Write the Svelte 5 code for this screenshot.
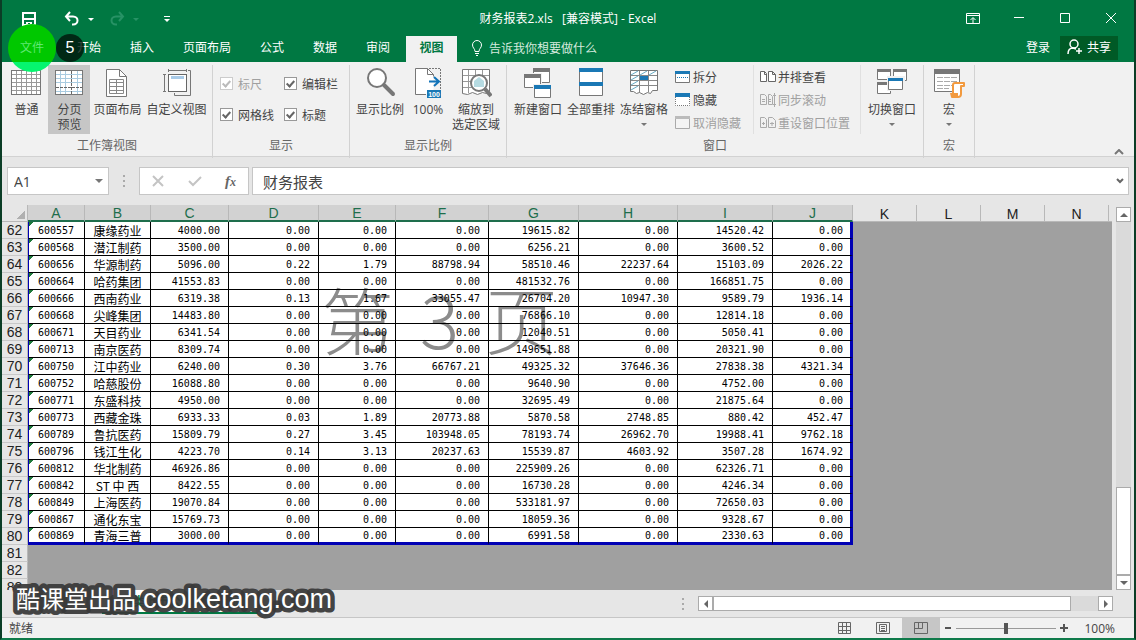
<script lang="ts">
	type Size = 'large' | 'small';

	const tabs = ['插入', '页面布局', '公式', '数据', '审阅', '视图'];
	let activeTab = $state('视图');

	const columns = ['A', 'B', 'C', 'D', 'E', 'F', 'G', 'H', 'I', 'J'];
	const emptyColumns = ['K', 'L', 'M', 'N'];

	// code|name|C..J
	const source = `600557|康缘药业|4000.00|0.00|0.00|0.00|19615.82|0.00|14520.42|0.00
600568|潜江制药|3500.00|0.00|0.00|0.00|6256.21|0.00|3600.52|0.00
600656|华源制药|5096.00|0.22|1.79|88798.94|58510.46|22237.64|15103.09|2026.22
600664|哈药集团|41553.83|0.00|0.00|0.00|481532.76|0.00|166851.75|0.00
600666|西南药业|6319.38|0.13|1.67|33055.47|26704.20|10947.30|9589.79|1936.14
600668|尖峰集团|14483.80|0.00|0.00|0.00|76866.10|0.00|12814.18|0.00
600671|天目药业|6341.54|0.00|0.00|0.00|12040.51|0.00|5050.41|0.00
600713|南京医药|8309.74|0.00|0.00|0.00|149651.88|0.00|20321.90|0.00
600750|江中药业|6240.00|0.30|3.76|66767.21|49325.32|37646.36|27838.38|4321.34
600752|哈慈股份|16088.80|0.00|0.00|0.00|9640.90|0.00|4752.00|0.00
600771|东盛科技|4950.00|0.00|0.00|0.00|32695.49|0.00|21875.64|0.00
600773|西藏金珠|6933.33|0.03|1.89|20773.88|5870.58|2748.85|880.42|452.47
600789|鲁抗医药|15809.79|0.27|3.45|103948.05|78193.74|26962.70|19988.41|9762.18
600796|钱江生化|4223.70|0.14|3.13|20237.63|15539.87|4603.92|3507.28|1674.92
600812|华北制药|46926.86|0.00|0.00|0.00|225909.26|0.00|62326.71|0.00
600842|ST 中 西|8422.55|0.00|0.00|0.00|16730.28|0.00|4246.34|0.00
600849|上海医药|19070.84|0.00|0.00|0.00|533181.97|0.00|72650.03|0.00
600867|通化东宝|15769.73|0.00|0.00|0.00|18059.36|0.00|9328.67|0.00
600869|青海三普|3000.00|0.00|0.00|0.00|6991.58|0.00|2330.63|0.00`;

	const rows = source.split('\n').map((line, i) => ({ number: 62 + i, cells: line.split('|') }));
	const emptyRows = [81, 82, 83];

	let checks = $state([
		{ id: 'ruler', label: '标尺', checked: true, disabled: true },
		{ id: 'formula-bar', label: '编辑栏', checked: true, disabled: false },
		{ id: 'gridlines', label: '网格线', checked: true, disabled: false },
		{ id: 'headings', label: '标题', checked: true, disabled: false }
	]);

	let zoom = $state(100);
	let formula = $state('财务报表');
	let cellName = $state('A1');
</script>

{#snippet icon(name: string, size: Size = 'large')}
	<svg class="icon {size}" viewBox={size === 'large' ? '0 0 32 32' : '0 0 18 16'} aria-hidden="true">
		{#if name === 'normal'}
			<rect x="1.5" y="3.5" width="29" height="24" fill="#fff" stroke="#777" />
			<path d="M6.5 4v23M11.5 4v23M16.5 4v23M21.5 4v23M26.5 4v23M2 7.5h28M2 11.5h28M2 15.5h28M2 19.5h28M2 23.5h28" stroke="#999" fill="none" />
		{:else if name === 'break'}
			<rect x="2.5" y="3.5" width="27" height="24" fill="#fff" stroke="#777" />
			<path d="M7.5 4v23M12.5 4v23M24.5 4v23M3 7.5h26M3 11.5h26M3 15.5h26M3 24.5h26" stroke="#a9cbe0" fill="none" />
			<path d="M18.5 4v23M3 20.5h26" stroke="#666" stroke-dasharray="3 1" fill="none" />
		{:else if name === 'page'}
			<path d="M5.5 2.5h13l7 7v20h-20z" fill="#fff" stroke="#777" />
			<path d="M18.5 2.5v7h7" fill="none" stroke="#777" />
			<path d="M8.5 12.5h14v14h-14zM15.5 12.5v14M8.5 15.5h14M8.5 19.5h14M8.5 23.5h14" fill="none" stroke="#888" />
		{:else if name === 'custom'}
			<rect x="7.5" y="7.5" width="18" height="17" fill="#fff" stroke="#666" />
			<path d="M10 9h13v3H10z" fill="#a9cbe8" />
			<path d="M7.5 3.5h18M7.5 2v3M25.5 2v3M3.5 7.5v17M2 7.5h3M2 24.5h3M27 3.5h2.5v25h-16V26" fill="none" stroke="#777" />
		{:else if name === 'zoom'}
			<circle cx="13" cy="11" r="9" fill="#fff" stroke="#777" stroke-width="2" />
			<path d="M20 18l9 9" stroke="#777" stroke-width="4" stroke-linecap="round" />
		{:else if name === 'hundred'}
			<path d="M3.5 1.5h12l6 6v20h-18z" fill="#fff" />
			<path d="M14 27.5H3.5v-26h12l6 6h-6v-6" fill="none" stroke="#777" />
			<path d="M17 1.5h11.500V23M21.5 7.5V10" fill="none" stroke="#777" stroke-dasharray="2 1" />
			<path d="M17 14.5h9M22 10l5 4.500-5 4.500" fill="none" stroke="#1273b8" stroke-width="2" />
			<rect x="15" y="23" width="14" height="8" fill="#1a78b5" />
			<text x="22" y="30" font-size="7" font-weight="bold" text-anchor="middle" fill="#fff" font-family="Liberation Sans, sans-serif">100</text>
		{:else if name === 'selection'}
			<path d="M2.5 2.5h27v22l-3 2-4-1-5 2-5-2-5 2-5-1z" fill="#fff" stroke="#777" />
			<path d="M8.5 3v23M15.5 3v5M22.5 3v5M3 8.5h26M3 14.5h9M3 20.5h9" stroke="#999" fill="none" />
			<circle cx="19" cy="16" r="8" fill="#fff" stroke="#777" stroke-width="2" />
			<path d="M14 14l5-4 5 4v6H14z" fill="#b6dbe2" />
			<path d="M25 22l6 7" stroke="#777" stroke-width="4" />
		{:else if name === 'new-window'}
			<path d="M11.5 2.5h16v13h-16z" fill="#fff" stroke="#777" /><path d="M11 1h17v4H11z" fill="#777" />
			<path d="M1 6h19v15H1z" fill="#f1f1f1" />
			<path d="M2.5 8.5h16v12h-16z" fill="#fff" stroke="#777" /><path d="M2 7h17v4H2z" fill="#777" />
			<path d="M11 17h19v14H11z" fill="#f1f1f1" />
			<path d="M12.500 18.5h16v12h-16z" fill="#fff" stroke="#777" /><path d="M12 18h17v4H12z" fill="#1a78b5" />
		{:else if name === 'arrange'}
			<path d="M4.5 1.5h23v27h-23z" fill="#fff" stroke="#777" />
			<path d="M4 1h24v4H4zM4 15h24v4H4z" fill="#1a78b5" />
		{:else if name === 'freeze'}
			<path d="M2.5 3.5h27v20h-5l-2 3-3-1-4 2-4-2-3 1-3-2h-3z" fill="#fff" stroke="#777" />
			<path d="M11.5 4v22M20.5 4v21M3 8.5h26M3 13.5h26M3 18.5h26" fill="none" stroke="#888" />
			<path d="M3 8l7-4M12 8l7-4M21 8l7-4M3 13l7-4M3 18l7-4M3 23l7-4" stroke="#67abc4" fill="none" />
			<path d="M12 9h8v4h-8z" fill="#1a78b5" />
		{:else if name === 'switch'}
			<path d="M1.5 2.5h13v10h-13zM17.5 2.5h13v11h-13zM1.5 15.5h13v11h-13z" fill="#fff" stroke="#777" />
			<path d="M1 2h14v3H1zM17 2h14v3H17zM1 15h14v3H1z" fill="#777" />
			<path d="M11 9h18v15H11z" fill="#f1f1f1" />
			<path d="M12.5 11.5h14v11h-14z" fill="#fff" stroke="#777" /><path d="M12 11h15v3H12z" fill="#1a78b5" />
		{:else if name === 'macro'}
			<path d="M1.5 3.5h25v21h-25z" fill="#fff" stroke="#777" /><path d="M1 2h26v5H1z" fill="#777" />
			<path d="M4 10.5h20M4 14.5h20M4 18.5h16M4 21.5h12" stroke="#aaa" stroke-dasharray="6 1" fill="none" />
			<path d="M20 27V18c0-2 1-2 2-2h9v3h-3v8c0 2-1 3-3 3h-6v-3h6" fill="#fff" stroke="#f29a3f" stroke-width="2" stroke-linejoin="round" />
			<path d="M17 26h8v4h-7z" fill="#f29a3f" />
		{:else if name === 'split'}
			<path d="M1.5 2.5h14v11h-14z" fill="#fff" stroke="#777" /><path d="M1 2h15v3H1z" fill="#1a78b5" />
			<path d="M3 8.5h12" stroke="#1a78b5" stroke-dasharray="1 1" />
		{:else if name === 'hide'}
			<path d="M1 1h15v13H1z" fill="#fff" />
			<path d="M1.5 5v8.500h14V5" fill="none" stroke="#777" stroke-dasharray="1 1" /><path d="M1 1h15v4H1z" fill="#1a78b5" />
		{:else if name === 'unhide'}
			<path d="M1.5 1.5h14v12h-14z" fill="#f4f4f4" stroke="#aaa" /><path d="M1 1h15v3H1z" fill="#bbb" />
		{:else if name === 'side'}
			<path d="M1.5 2.5h4l2 2v8h-6zM9.5 2.5h4l3 3v7h-7zM5.5 2.5v3h2M13.5 2.5v3h3" fill="#fff" stroke="#666" />
		{:else if name === 'sync'}
			<path d="M1.5 2.5h4l2 2v8h-6zM9.5 2.5h2l2 2v8h-4z" fill="none" stroke="#aaa" />
			<path d="M3 7.5h3M3 9.5h3M10 7.5h2M10 9.5h2M15.5 1v14M14 3.5h3M14 12.5h3" stroke="#aaa" fill="none" />
		{:else if name === 'reset'}
			<path d="M1.5 2.5h4l2 2v8h-6zM9.5 2.5h4l3 3v7h-7z" fill="none" stroke="#aaa" />
			<path d="M3 8.5h3M4.5 7v3M11 8.5h4M13 7v4" stroke="#aaa" fill="none" />
		{/if}
	</svg>
{/snippet}

{#snippet bigButton(name: string, lines: string[], arrow = false, selected = false)}
	<button class="big" class:selected>
		{@render icon(name)}
		{#each lines as line}<span>{line}</span>{/each}
		{#if arrow}<i class="caret"></i>{/if}
	</button>
{/snippet}

{#snippet smallButton(name: string, label: string, disabled = false)}
	<button class="small-button" {disabled}>{@render icon(name, 'small')}<span>{label}</span></button>
{/snippet}

<div class="window">
	<header class="top">
		<div class="title-bar">
			<div class="quick">
				<button aria-label="保存">
					<svg width="16" height="16" viewBox="0 0 16 16"><path d="M2 2h12v12H2zM3 8h10" fill="none" stroke="#fff" stroke-width="2" /><path d="M5 11h6v4H9v-3H7v3H5z" fill="#fff" /></svg>
				</button>
				<button class="undo" aria-label="撤消">
					<svg width="16" height="16" viewBox="0 0 16 16"><path d="M2 5.5h7c6 0 6 8 0 8H8M6 1L2 5.500 6 10" fill="none" stroke="#fff" stroke-width="2" /></svg>
					<i class="caret"></i>
				</button>
				<button class="redo" aria-label="恢复" disabled>
					<svg width="16" height="16" viewBox="0 0 16 16"><path d="M14 5.5H7c-6 0-6 8 0 8h1M10 1l4 4.500-4 4.500" fill="none" stroke="#279265" stroke-width="2" /></svg>
					<i class="caret"></i>
				</button>
				<button class="customize" aria-label="自定义快速访问工具栏"><i class="caret"></i></button>
			</div>
			<h1>财务报表2.xls&nbsp;&nbsp; [兼容模式] - Excel</h1>
			<div class="controls">
				<button aria-label="功能区显示选项"><svg width="14" height="12" viewBox="0 0 14 12"><path d="M.5.500h13v10H.500zM1 2.500h12M7 10V5M4.500 7L7 4.500 9.500 7" fill="none" stroke="#fff" /></svg></button>
				<button aria-label="最小化"><svg width="12" height="12" viewBox="0 0 12 12"><path d="M1 4.500h10" stroke="#fff" /></svg></button>
				<button aria-label="最大化"><svg width="12" height="12" viewBox="0 0 12 12"><path d="M1.500.500h9v9h-9z" fill="none" stroke="#fff" /></svg></button>
				<button aria-label="关闭"><svg width="12" height="12" viewBox="0 0 12 12"><path d="M1 0l10 10M11 0L1 10" stroke="#fff" /></svg></button>
			</div>
		</div>
		<nav class="tabs">
			<button class="tab file"><span>文件</span></button>
			<button class="tab">开始<span class="step">5</span></button>
			{#each tabs as tab}
				<button class="tab" class:active={tab === activeTab} onclick={() => (activeTab = tab)}>{tab}</button>
			{/each}
			<button class="tell">
				<svg width="12" height="16" viewBox="0 0 12 16"><path d="M4 11.500c0-3-2.500-3.500-2.500-6.500a4.500 4.500 0 0 1 9 0c0 3-2.500 3.500-2.500 6.500zM4 13.500h4M5 15.500h2" fill="none" stroke="#fff" /></svg>
				告诉我你想要做什么
			</button>
			<div class="account">
				<button class="login">登录</button>
				<button class="share">
					<svg width="16" height="16" viewBox="0 0 16 16"><circle cx="7" cy="5" r="4" fill="none" stroke="#fff" stroke-width="1.500" /><path d="M1 15c0-4 2-6 5-6l3 1M12 9v6M9 12h6" fill="none" stroke="#fff" stroke-width="1.500" /></svg>
					共享
				</button>
			</div>
		</nav>
	</header>

	<section class="ribbon">
		<div class="group">
			<div class="group-body">
				{@render bigButton('normal', ['普通'])}
				{@render bigButton('break', ['分页', '预览'], false, true)}
				{@render bigButton('page', ['页面布局'])}
				{@render bigButton('custom', ['自定义视图'])}
			</div>
			<div class="group-label">工作簿视图</div>
		</div>
		<div class="group">
			<div class="group-body checks">
				{#each checks as check}
					<label for={check.id} class:disabled={check.disabled}>
						<input type="checkbox" id={check.id} bind:checked={check.checked} disabled={check.disabled} />
						{check.label}
					</label>
				{/each}
			</div>
			<div class="group-label">显示</div>
		</div>
		<div class="group">
			<div class="group-body">
				{@render bigButton('zoom', ['显示比例'])}
				{@render bigButton('hundred', ['100%'])}
				{@render bigButton('selection', ['缩放到', '选定区域'])}
			</div>
			<div class="group-label">显示比例</div>
		</div>
		<div class="group">
			<div class="group-body">
				{@render bigButton('new-window', ['新建窗口'])}
				{@render bigButton('arrange', ['全部重排'])}
				{@render bigButton('freeze', ['冻结窗格'], true)}
				<div class="stack">
					{@render smallButton('split', '拆分')}
					{@render smallButton('hide', '隐藏')}
					{@render smallButton('unhide', '取消隐藏', true)}
				</div>
				<div class="stack ruled">
					{@render smallButton('side', '并排查看')}
					{@render smallButton('sync', '同步滚动', true)}
					{@render smallButton('reset', '重设窗口位置', true)}
				</div>
				{@render bigButton('switch', ['切换窗口'], true)}
			</div>
			<div class="group-label">窗口</div>
		</div>
		<div class="group">
			<div class="group-body">
				{@render bigButton('macro', ['宏'], true)}
			</div>
			<div class="group-label">宏</div>
		</div>
		<button class="collapse" aria-label="折叠功能区"><svg width="10" height="6" viewBox="0 0 10 6"><path d="M1 5l4-4 4 4" fill="none" stroke="#777" stroke-width="2" /></svg></button>
	</section>

	<section class="formula-bar">
		<div class="name-box">
			<input type="text" aria-label="名称框" bind:value={cellName} />
			<i class="caret"></i>
		</div>
		<span class="grip"></span>
		<div class="fx-box">
			<button aria-label="取消"><svg width="12" height="12" viewBox="0 0 12 12"><path d="M1 1l10 10M11 1L1 11" stroke="#c4c4c4" stroke-width="2" /></svg></button>
			<button aria-label="输入"><svg width="14" height="12" viewBox="0 0 14 12"><path d="M1 6l4 4 8-8" fill="none" stroke="#c4c4c4" stroke-width="2" /></svg></button>
			<button class="fx" aria-label="插入函数">f<small>x</small></button>
		</div>
		<div class="formula">
			<input type="text" aria-label="编辑栏" bind:value={formula} />
			<svg width="8" height="6" viewBox="0 0 8 6"><path d="M1 1l3 3 3-3" fill="none" stroke="#666" stroke-width="2" /></svg>
		</div>
	</section>

	<main class="sheet">
		<div class="grid">
			<div class="page-mark" aria-hidden="true"><span>第</span><span>3</span><span>页</span></div>
			<table>
				<colgroup>
					<col class="w-head" /><col class="w-a" /><col class="w-b" /><col class="w-c" /><col class="w-d" />
					<col class="w-e" /><col class="w-f" /><col class="w-g" /><col class="w-h" /><col class="w-i" /><col class="w-j" />
					{#each emptyColumns as column (column)}<col class="w-empty" />{/each}
					<col />
				</colgroup>
				<thead>
					<tr>
						<th class="corner"><i></i></th>
						{#each columns as column}<th class="used">{column}</th>{/each}
						{#each emptyColumns as column}<th>{column}</th>{/each}
						<th class="rest"></th>
					</tr>
				</thead>
				<tbody>
					{#each rows as row, i}
						<tr class:last={i === rows.length - 1}>
							<th>{row.number}</th>
							{#each row.cells as cell, c}
								<td class:code={c === 0} class:name={c === 1}>{cell}</td>
							{/each}
							<td class="void" colspan="5"></td>
						</tr>
					{/each}
					{#each emptyRows as number}
						<tr><th>{number}</th><td class="void" colspan="15"></td></tr>
					{/each}
				</tbody>
			</table>
		</div>
		<div class="vscroll">
			<button aria-label="向上滚动"><i class="caret up"></i></button>
			<div class="track"><div class="thumb"></div></div>
			<button aria-label="向下滚动"><i class="caret"></i></button>
		</div>
	</main>

	<div class="sheet-bar">
		<button class="sheet-tab">××类上市公司财务指标</button>
		<button class="add" aria-label="新工作表">+</button>
		<span class="grip"></span>
		<div class="hscroll">
			<button aria-label="向左滚动"><i class="caret left"></i></button>
			<div class="track"><div class="thumb"></div></div>
			<button aria-label="向右滚动"><i class="caret right"></i></button>
		</div>
	</div>

	<footer class="status">
		<span class="ready">就绪</span>
		<button aria-label="普通视图"><svg width="14" height="14" viewBox="0 0 14 14"><path d="M.5 1.500h12v11H.500zM4.500 1.500v11M8.500 1.500v11M.5 5.500h12M.5 9.500h12" fill="none" stroke="#666" /></svg></button>
		<button aria-label="页面布局视图"><svg width="14" height="14" viewBox="0 0 14 14"><path d="M.5 1.500h13v11H.500zM3.500 3.500h7v7h-7zM5 5.500h4M5 7.500h4M5 9.500h4" fill="none" stroke="#666" /></svg></button>
		<button class="current" aria-label="分页预览视图"><svg width="14" height="14" viewBox="0 0 14 14"><path d="M.5 1.500h13v11H.500zM.5 7.500h8v-6M4.500 1.500v6" fill="none" stroke="#666" /></svg></button>
		<button class="step-button" aria-label="缩小" onclick={() => (zoom -= 10)}><svg width="8" height="8" viewBox="0 0 8 8"><path d="M1 4h6" stroke="#555" stroke-width="2" /></svg></button>
		<input class="zoom" type="range" min="0" max="200" aria-label="缩放" bind:value={zoom} />
		<button class="step-button" aria-label="放大" onclick={() => (zoom += 10)}><svg width="8" height="8" viewBox="0 0 8 8"><path d="M0 4h8M4 0v8" stroke="#555" stroke-width="2" /></svg></button>
		<span class="percent">{zoom}%</span>
	</footer>

	<svg class="caption" width="340" height="44" viewBox="0 0 340 44">
		<text x="7" y="29">酷课堂出品</text>
		<text class="site" x="134" y="29">coolketang.com</text>
	</svg>
</div>

<style>
	:global(body) {
		margin: 0;
	}

	.window {
		position: relative;
		display: flex;
		flex-direction: column;
		height: 100vh;
		box-sizing: border-box;
		border: 2px solid #0b3d26;
		border-top: 0;
		border-bottom-color: #0f7a4a;
		background: #e6e6e6;
		color: #444;
		font-family: 'Open Sans', 'Noto Sans CJK SC', sans-serif;
		font-size: 12px;
		overflow: hidden;
	}

	button {
		display: flex;
		align-items: center;
		justify-content: center;
		padding: 0;
		border: 0;
		background: none;
		color: inherit;
		font: inherit;
		white-space: nowrap;
	}

	svg {
		display: block;
		flex: none;
	}

	.caret {
		border: 3px solid transparent;
		border-top-color: currentColor;
		border-bottom: 0;
	}

	.caret.up {
		transform: rotate(180deg);
	}

	.caret.left {
		transform: rotate(90deg);
	}

	.caret.right {
		transform: rotate(-90deg);
	}

	/* Title bar and tabs */
	.top {
		position: relative;
		z-index: 2;
		flex: none;
		background: #007842;
		color: #fff;
	}

	.title-bar {
		display: grid;
		grid-template-columns: 1fr auto 1fr;
		align-items: center;
		height: 36px;
	}

	.quick {
		display: flex;
		align-items: center;
		gap: 27px;
		padding-left: 19px;
	}

	.quick button {
		gap: 8px;
	}

	.redo {
		margin-left: -12px;
		color: #279265;
	}

	.customize {
		flex-direction: column;
		margin-left: -2px;
	}

	.quick .customize {
		gap: 2px;
	}

	.customize::before {
		content: '';
		width: 6px;
		height: 1px;
		background: #fff;
	}

	h1 {
		margin: 0;
		font-size: 12px;
		line-height: 38px;
		font-weight: 400;
	}

	.controls {
		display: flex;
		justify-content: flex-end;
	}

	.controls button {
		width: 46px;
		height: 32px;
	}

	.tabs {
		display: flex;
		gap: 3px;
		height: 26px;
		padding-left: 1px;
	}

	.tab {
		position: relative;
		padding: 0 13px 4px;
	}

	.tab.file {
		padding: 0 17px 4px;
		color: #5fe873;
	}

	.tab.file span {
		position: relative;
	}

	.tab.file::before {
		content: '';
		position: absolute;
		left: 5px;
		top: -12px;
		width: 48px;
		height: 48px;
		border-radius: 50%;
		background: linear-gradient(#00c800 38px, #06f56f 38px);
	}

	.step {
		position: absolute;
		left: -8px;
		top: -2px;
		width: 28px;
		height: 28px;
		border-radius: 50%;
		background: rgba(0, 20, 10, 0.8);
		font: 16px/28px 'Liberation Sans', sans-serif;
		text-align: center;
	}

	.tab.active {
		width: 51px;
		background: #f1f1f1;
		color: #007842;
		font-weight: 700;
	}

	.tell {
		gap: 6px;
		margin-left: 11px;
		padding-bottom: 2px;
		color: #d5eade;
	}

	.account {
		display: flex;
		gap: 10px;
		margin-left: auto;
		padding-right: 16px;
	}

	.login {
		padding-bottom: 4px;
	}

	.share {
		gap: 4px;
		height: 24px;
		padding: 0 7px 2px;
		background: #005a26;
	}

	/* Ribbon */
	.ribbon {
		display: grid;
		grid-template-columns: 211px 137px 157px 417px 51px 1fr;
		flex: none;
		padding: 3px 0 0;
		height: 91px;
		border-bottom: 1px solid #d2d2d2;
		background: #f1f1f1;
	}

	.group {
		margin-bottom: 3px;
		border-right: 1px solid #d2d2d2;
	}

	.group-body {
		display: flex;
		justify-content: center;
		gap: 1px;
		height: 69px;
	}

	.group-label {
		color: #666;
		line-height: 24px;
		text-align: center;
	}

	.big {
		flex-direction: column;
		justify-content: flex-start;
		min-width: 42px;
		padding: 2px 2px 0;
		line-height: 15px;
	}

	.big.selected {
		background: #c6c6c6;
	}

	.icon.large {
		width: 32px;
		height: 32px;
		margin-bottom: 3px;
	}

	.icon.small {
		width: 18px;
		height: 16px;
	}

	.big .caret {
		margin-top: 6px;
		color: #777;
	}

	.checks {
		display: grid;
		grid-template-columns: 64px auto;
		grid-auto-rows: 31px;
		gap: 0;
		justify-content: start;
		padding: 3px 0 0 7px;
		box-sizing: border-box;
	}

	.checks label {
		display: flex;
		align-items: center;
		gap: 5px;
	}

	.checks label.disabled {
		color: #a0a0a0;
	}

	.checks input {
		appearance: none;
		display: grid;
		place-items: center;
		width: 13px;
		height: 13px;
		margin: 0;
		border: 1px solid #999;
		background: #fff;
		color: #666;
	}

	.checks input:disabled {
		border-color: #ccc;
		color: #bbb;
	}

	.checks input:checked::after {
		content: '';
		width: 3px;
		height: 6px;
		margin-bottom: 2px;
		border: solid currentColor;
		border-width: 0 2px 2px 0;
		transform: rotate(42deg);
	}

	.stack {
		display: grid;
		grid-auto-rows: 23px;
		align-content: start;
		padding: 0 11px 0 3px;
	}

	.stack.ruled {
		padding: 0 10px 0 5px;
		border: solid #e0e0e0;
		border-width: 0 1px;
		margin-right: 4px;
	}

	.small-button {
		justify-content: flex-start;
		gap: 1px;
	}

	.small-button:disabled {
		color: #a0a0a0;
	}

	.collapse {
		align-self: end;
		justify-self: end;
		padding: 0 10px 6px;
	}

	/* Formula bar */
	.formula-bar {
		display: flex;
		flex: none;
		align-items: center;
		height: 28px;
		padding: 10px 5px;
	}

	.name-box,
	.fx-box,
	.formula {
		display: flex;
		align-items: center;
		height: 28px;
		box-sizing: border-box;
		border: 1px solid #c6c6c6;
		background: #fff;
	}

	.name-box {
		width: 102px;
		padding: 0 5px 0 6px;
	}

	.name-box .caret {
		border-width: 4px 4px 0;
		color: #777;
	}

	.name-box input,
	.formula input {
		flex: 1;
		min-width: 0;
		padding: 0;
		border: 0;
		background: none;
		color: #444;
		font: 14px 'Open Sans', 'Noto Sans CJK SC', sans-serif;
	}

	.formula input {
		font-size: 15px;
	}

	.grip {
		width: 2px;
		height: 12px;
		margin: 0 14px;
		background: repeating-linear-gradient(#aaa 0 2px, transparent 2px 5px);
	}

	.fx-box {
		justify-content: space-between;
		width: 110px;
		padding: 0 12px;
	}

	.fx {
		align-items: baseline;
		color: #666;
		font: italic bold 15px 'Liberation Serif', serif;
	}

	.fx small {
		font-size: 12px;
	}

	.formula {
		flex: 1;
		margin-left: 3px;
		padding: 0 4px 0 10px;
	}

	/* Sheet */
	.sheet {
		display: flex;
		flex: 1;
		gap: 4px;
		min-height: 0;
		padding-right: 3px;
	}

	.grid {
		position: relative;
		flex: 1;
		min-width: 0;
		overflow: hidden;
		background: #fff;
	}

	/* Printed page number lies between the paper and the cell values */
	.page-mark {
		position: absolute;
		left: 319px;
		top: 60px;
		display: flex;
		gap: 26px;
		color: #8c8c8c;
		font: 300 73px/104px 'Noto Sans CJK SC', sans-serif;
	}

	table {
		position: relative;
		width: 100%;
		table-layout: fixed;
		border-collapse: separate;
		border-spacing: 0;
	}

	.w-head { width: 26px; }
	.w-a { width: 57px; }
	.w-b { width: 66px; }
	.w-c { width: 78px; }
	.w-d { width: 90px; }
	.w-e { width: 77px; }
	.w-f { width: 93px; }
	.w-g { width: 90px; }
	.w-h { width: 99px; }
	.w-i { width: 95px; }
	.w-j { width: 80px; }
	.w-empty { width: 64px; }

	th,
	td {
		height: 17px;
		box-sizing: border-box;
		padding: 0;
		white-space: nowrap;
	}

	th {
		border-right: 1px solid #b8b8b8;
		border-bottom: 1px solid #c8c8c8;
		background: #e6e6e6;
		color: #222;
		font: 14px/16px 'Liberation Sans', sans-serif;
		text-align: center;
	}

	thead th {
		padding-top: 2px;
		line-height: 13px;
		border-bottom: 1px solid #b8b8b8;
	}

	thead th.used {
		border-bottom: 2px solid #1e6e4c;
		background: #d2d2d2;
		color: #1e6e4c;
	}

	th.rest {
		border-right: 0;
	}

	.corner i {
		display: block;
		width: 9px;
		height: 9px;
		margin-left: 14px;
		background: linear-gradient(135deg, transparent 50%, #b0b0b0 50%);
	}

	td {
		padding: 2px 8px 0 0;
		border-right: 1px solid #000;
		border-bottom: 1px solid #000;
		color: #000;
		font: 10px/14px 'DejaVu Sans Mono', monospace;
		text-align: right;
	}

	td.code {
		padding-right: 1px;
		border-left: 1px solid #0000b4;
		background: linear-gradient(135deg, #1e7a3c 3px, transparent 3px);
		text-align: center;
	}

	td.name {
		padding-right: 0;
		font: 12px/14px 'Noto Sans CJK SC', sans-serif;
		text-align: center;
	}

	td:nth-child(11) {
		padding-right: 7px;
		border-right: 3px solid #0000b4;
	}

	.last td {
		border-bottom: 3px solid #0000b4;
		line-height: 12px;
	}

	td.void,
	.last td.void {
		border: 0;
		background: #a0a0a0;
	}

	.vscroll {
		display: flex;
		flex-direction: column;
		width: 15px;
		padding: 2px 0 0;
	}

	.vscroll button,
	.hscroll button {
		flex: none;
		width: 15px;
		height: 15px;
		box-sizing: border-box;
		border: 1px solid #ababab;
		background: #fff;
		color: #666;
	}

	.vscroll .caret,
	.hscroll .caret {
		border-width: 4px 4px 0;
	}

	.track {
		display: flex;
		flex: 1;
		background: #dadada;
	}

	.thumb {
		box-sizing: border-box;
		border: 1px solid #ababab;
		background: #fff;
	}

	.vscroll .track {
		align-items: flex-end;
	}

	.vscroll .thumb {
		width: 100%;
		height: 25%;
	}

	/* Sheet tabs */
	.sheet-bar {
		display: flex;
		flex: none;
		align-items: center;
		height: 27px;
		border-bottom: 1px solid #c6c6c6;
		padding-right: 21px;
	}

	.sheet-tab {
		align-self: flex-start;
		width: 156px;
		height: 24px;
		margin-left: 100px;
		border-bottom: 2px solid #007842;
		background: #fff;
		color: #007842;
		font-weight: 700;
	}

	.add {
		width: 15px;
		height: 15px;
		margin-left: 38px;
		border: 1px solid #666;
		border-radius: 50%;
	}

	.sheet-bar .grip {
		margin-left: auto;
	}

	.hscroll {
		display: flex;
		width: 415px;
	}

	.hscroll .thumb {
		width: 93%;
	}

	/* Status bar */
	.status {
		display: flex;
		flex: none;
		align-items: center;
		height: 20px;
		padding-right: 19px;
		background: #f1f1f1;
	}

	.ready {
		margin: 0 auto 0 7px;
	}

	.status button {
		width: 38px;
		height: 20px;
	}

	.status .current {
		background: #c6c6c6;
	}

	.status .step-button {
		width: 16px;
	}

	.zoom {
		appearance: none;
		width: 100px;
		height: 12px;
		margin: 0;
		background: linear-gradient(#999, #999) center / 100% 1px no-repeat;
	}

	.zoom::-webkit-slider-thumb {
		appearance: none;
		width: 4px;
		height: 11px;
		background: #555;
	}

	.percent {
		width: 43px;
		text-align: right;
	}

	/* Channel caption laid over the window */
	.caption {
		position: absolute;
		left: 7px;
		bottom: 15px;
		overflow: visible;
		pointer-events: none;
	}

	.caption text {
		fill: #fff;
		stroke: #3a3a3a;
		stroke-width: 9px;
		stroke-linejoin: round;
		stroke-opacity: 0.95;
		paint-order: stroke;
		font: 24px 'Noto Sans CJK SC', sans-serif;
	}

	.caption .site {
		font: 27px 'Liberation Sans', sans-serif;
	}
</style>
